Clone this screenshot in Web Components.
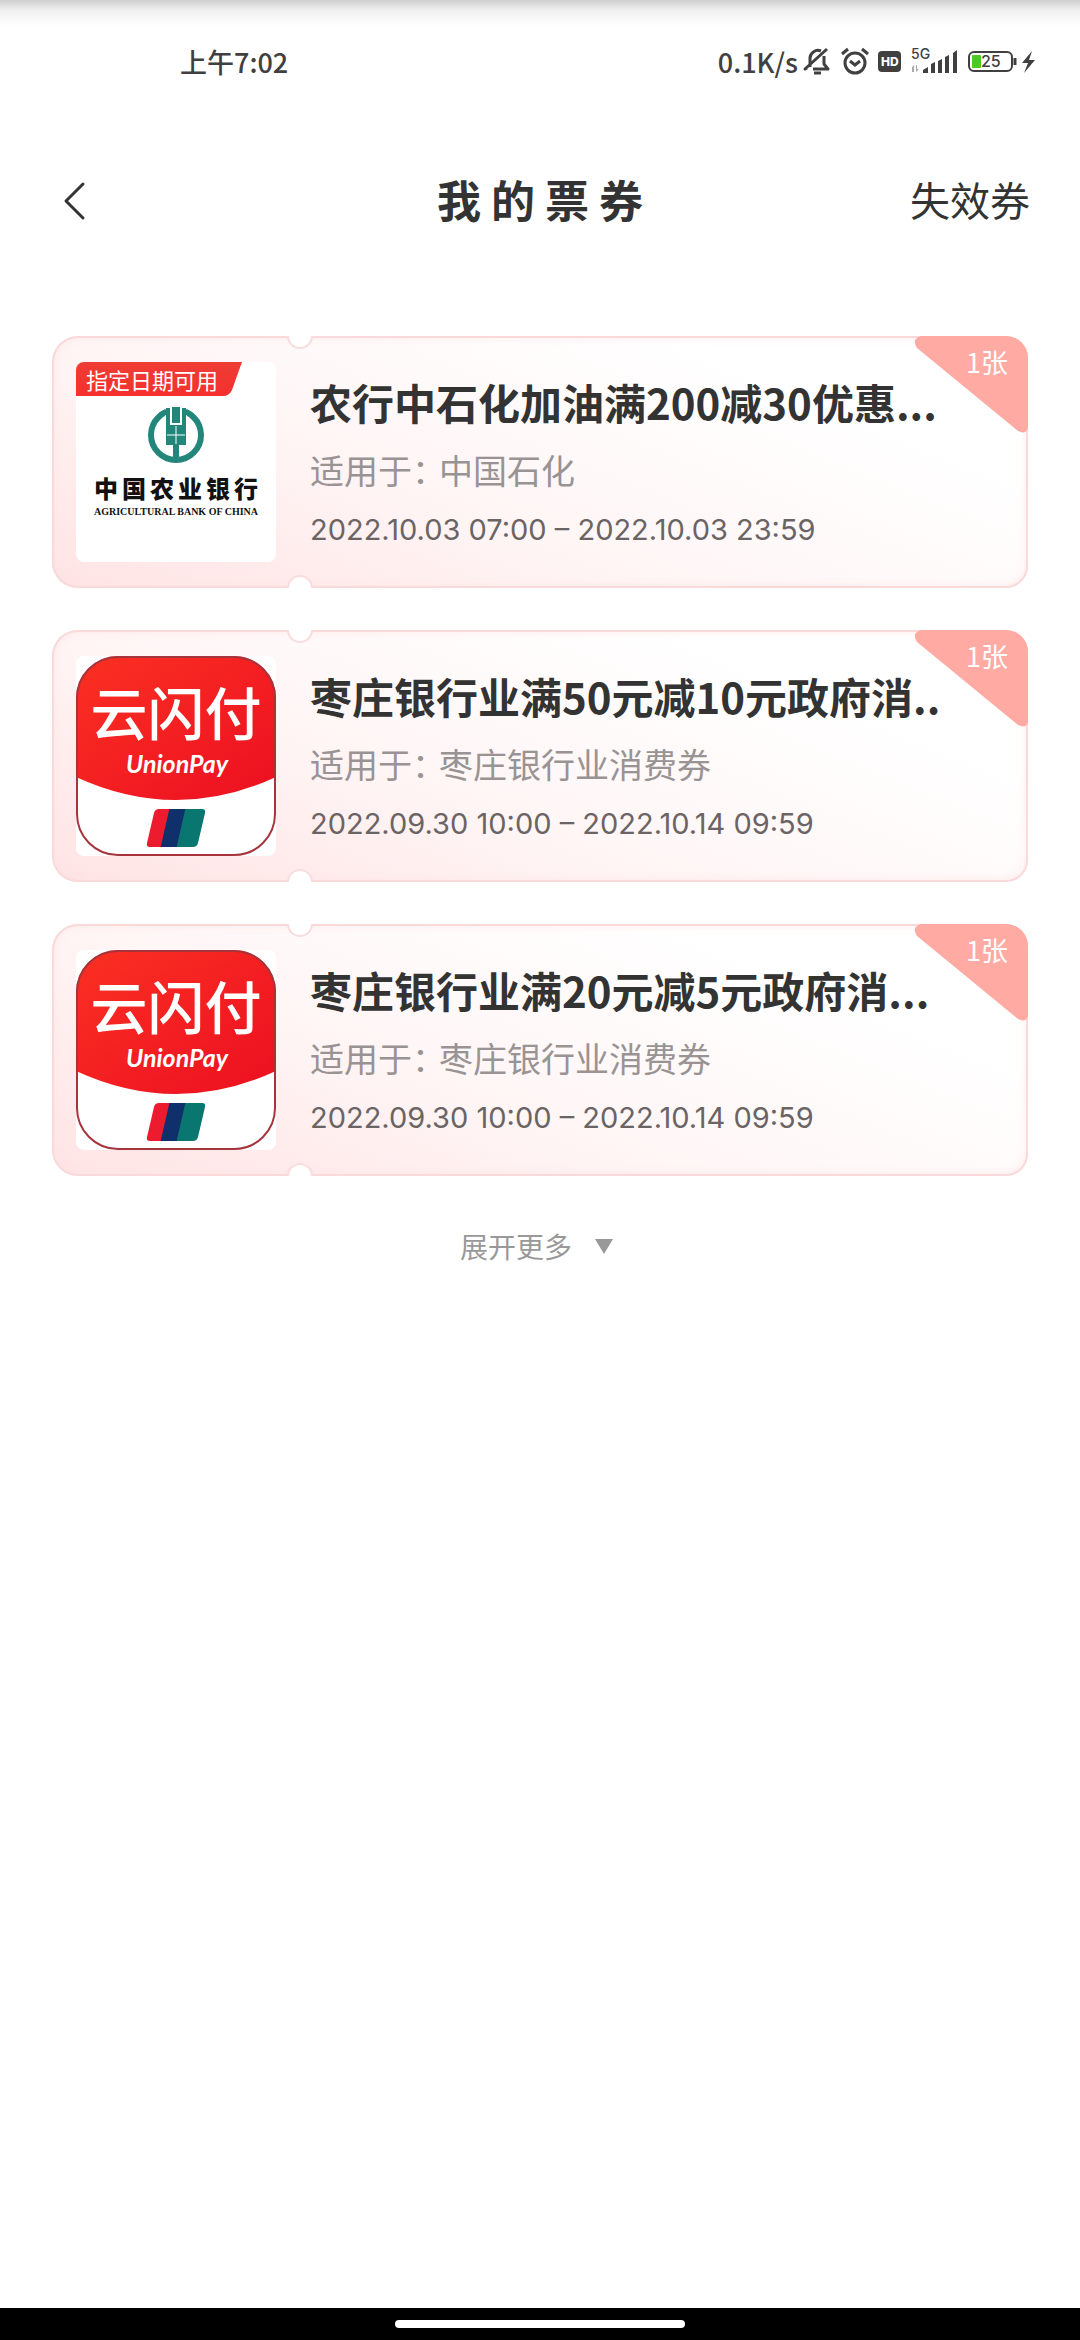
<!DOCTYPE html>
<html lang="zh-CN">
<head>
<meta charset="UTF-8">
<meta name="viewport" content="width=device-width, initial-scale=1">
<title>我的票券</title>
<style>
  body {
    margin: 0;
    min-height: 100vh;
    display: flex;
    flex-direction: column;
    background: linear-gradient(#cfcfcf, #f0f0f0 10px, #ffffff 26px) no-repeat #ffffff;
    color: #333333;
    font-family: "Noto Sans CJK SC", sans-serif;
  }

  main {
    flex: 1;
    display: flex;
    flex-direction: column;
    gap: 42px;
    padding: 60px 52px;
  }
</style>
</head>
<body>
  <status-bar></status-bar>
  <page-header>
    我的票券
    <span slot="action">失效券</span>
  </page-header>

  <main>
    <coupon-card>
      <abc-logo slot="logo"></abc-logo>
      <span slot="tag">指定日期可用</span>
      <span slot="title">农行中石化加油满200减30优惠...</span>
      <span slot="scope">中国石化</span>
      <span slot="date">2022.10.03 07:00 – 2022.10.03 23:59</span>
      <span slot="count">1张</span>
    </coupon-card>
    <coupon-card>
      <unionpay-logo slot="logo"></unionpay-logo>
      <span slot="title">枣庄银行业满50元减10元政府消..</span>
      <span slot="scope">枣庄银行业消费券</span>
      <span slot="date">2022.09.30 10:00 – 2022.10.14 09:59</span>
      <span slot="count">1张</span>
    </coupon-card>
    <coupon-card>
      <unionpay-logo slot="logo"></unionpay-logo>
      <span slot="title">枣庄银行业满20元减5元政府消...</span>
      <span slot="scope">枣庄银行业消费券</span>
      <span slot="date">2022.09.30 10:00 – 2022.10.14 09:59</span>
      <span slot="count">1张</span>
    </coupon-card>
    <more-button>展开更多</more-button>
  </main>

  <home-indicator></home-indicator>

<script>
class StatusBar extends HTMLElement {
  constructor() {
    super();
    this.attachShadow({ mode: 'open' });
    this.shadowRoot.innerHTML = `
      <style>
      :host {
        display: flex;
        align-items: center;
        justify-content: space-between;
        height: 122px;
        padding: 0 42px 0 180px;
        color: #404040;
        font-size: 27px;
        font-weight: 500;
      }

      .icons {
        display: flex;
        align-items: center;
      }

      .speed {
        margin-right: 4px;
      }

      svg {
        display: block;
        font-family: Inter, sans-serif;
      }
      </style>

      <span>上午7:02</span>
      <div class="icons">
        <span class="speed">0.1K/s</span>
        <svg width="236" height="34" viewBox="0 -2 236 34" fill="none" stroke="#404040" stroke-width="3">
          <!-- muted bell -->
          <path d="M8 21V12a8 8 0 0 1 11-7M22 10v8l4 5H11M5 22l-2 1 22-20" stroke-linejoin="round"/>
          <path d="M12 27h7"/>
          <!-- alarm -->
          <circle cx="53" cy="17" r="10"/>
          <path d="M48 15l5 4 5-4M40 8l6-5M60 3l6 5"/>
          <!-- HD -->
          <rect x="76" y="5" width="23" height="21" rx="4" fill="#404040" stroke="none"/>
          <text x="79" y="20" font-size="12" font-weight="800" fill="#ffffff" stroke="none">HD</text>
          <!-- signal -->
          <g stroke="none" fill="#404040">
            <text x="109" y="13" font-size="14" font-weight="500">5G</text>
            <path d="M121 27v-3l5-3v6zM129 27v-9l4-2v11zM136 27V15l4-2v14zM143 27V11l4-2v18zM151 27V7l4-3v23z"/>
            <path fill="#aaaaaa" d="M109 22l3-3v7h-2v-5zM114 19v7l3-3h-2v-4z"/>
          </g>
          <!-- battery -->
          <rect x="167" y="6" width="43" height="19" rx="5" stroke-width="2"/>
          <rect x="170" y="9" width="9" height="13" rx="1" fill="#4cc922" stroke="none"/>
          <text x="179" y="21" font-size="16" fill="#404040" stroke="none">25</text>
          <path d="M213 12v7"/>
          <path d="M230 5l-10 12h6l-4 10 11-13h-6z" fill="#404040" stroke="none"/>
        </svg>
      </div>
    `;
  }
}

class PageHeader extends HTMLElement {
  constructor() {
    super();
    this.attachShadow({ mode: 'open' });
    this.shadowRoot.innerHTML = `
      <style>
      :host {
        display: grid;
        grid-template-columns: 1fr auto 1fr;
        align-items: center;
        height: 154px;
        padding: 0 50px;
      }

      h1 {
        margin: 0;
        padding-left: 10px;
        font-size: 44px;
        line-height: 64px;
        letter-spacing: 10px;
      }

      button {
        padding: 0;
        border: 0;
        background: none;
        color: inherit;
        font: inherit;
        font-size: 40px;
        line-height: 64px;
      }

      .back {
        justify-self: start;
      }

      .back svg {
        display: block;
      }

      .action {
        justify-self: end;
      }
      </style>

      <button class="back" aria-label="返回">
        <svg width="44" height="44" viewBox="0 0 44 44" fill="none" stroke="#333333" stroke-width="3" stroke-linecap="round" stroke-linejoin="round">
          <path d="M33 7L16 24l17 17"/>
        </svg>
      </button>
      <h1><slot></slot></h1>
      <button class="action"><slot name="action"></slot></button>
    `;
  }
}

class CouponCard extends HTMLElement {
  constructor() {
    super();
    this.attachShadow({ mode: 'open' });
    this.shadowRoot.innerHTML = `
      <style>
      :host {
        display: block;
      }

      .card {
        position: relative;
        display: flex;
        align-items: center;
        gap: 34px;
        padding: 26px 24px;
        border-radius: 26px 22px 22px 26px;
        overflow: hidden;
        background: linear-gradient(22deg, #ffe3e4, #fff5f5 38%, #ffffff 78%);
        box-shadow: inset 0 0 0 2px #f9d9da, inset 0 0 12px #ffe3e3;
      }

      /* punched holes on the tear line */
      .card::before,
      .card::after {
        content: "";
        position: absolute;
        left: 235px;
        width: 22px;
        height: 22px;
        border: 2px solid #f9dcdd;
        border-radius: 50%;
        background: #ffffff;
      }

      .card::before {
        top: -13px;
      }

      .card::after {
        bottom: -13px;
      }

      .logo {
        position: relative;
        flex: none;
        width: 200px;
        height: 200px;
        border-radius: 8px;
        overflow: hidden;
        background: #ffffff;
      }

      .tag {
        position: absolute;
        top: 0;
        left: 0;
        padding: 0 26px 0 10px;
        background: linear-gradient(#ee3d35, #f5302f);
        clip-path: path("M0 0H166L156 28Q153 34 147 34H0Z");
        color: #ffffff;
        font-size: 22px;
        line-height: 34px;
      }

      .info {
        flex: 1;
        min-width: 0;
        white-space: nowrap;
      }

      h2 {
        margin: 0;
        font-size: 42px;
        line-height: 64px;
      }

      p {
        margin: 6px 0 0;
      }

      .scope {
        display: flex;
        gap: 10px;
        color: #999393;
        font-size: 34px;
        line-height: 60px;
      }

      .label {
        font-feature-settings: "halt";
      }

      .date {
        color: #6b6464;
        font-family: Inter, sans-serif;
        font-size: 29px;
        line-height: 48px;
      }

      .count {
        position: absolute;
        top: 0;
        right: 0;
        width: 114px;
        height: 97px;
        padding: 6px 20px 0 0;
        box-sizing: border-box;
        background: #ffaba4;
        clip-path: path("M7 0H114V92Q112 99 104 95L3 12Q-3 3 7 0Z");
        color: #ffffff;
        font-size: 27px;
        line-height: 40px;
        text-align: right;
      }
      </style>

      <article class="card">
        <div class="logo">
          <slot name="logo"></slot>
          <div class="tag" hidden><slot name="tag"></slot></div>
        </div>
        <div class="info">
          <h2><slot name="title"></slot></h2>
          <p class="scope"><span class="label">适用于：</span><slot name="scope"></slot></p>
          <p class="date"><slot name="date"></slot></p>
        </div>
        <div class="count"><slot name="count"></slot></div>
      </article>
    `;
  }

  connectedCallback() {
    this.shadowRoot.querySelector('.tag').hidden = !this.querySelector('[slot="tag"]');
  }
}

class AbcLogo extends HTMLElement {
  constructor() {
    super();
    this.attachShadow({ mode: 'open' });
    this.shadowRoot.innerHTML = `
      <style>
      :host {
        display: flex;
        flex-direction: column;
        align-items: center;
        padding-top: 45px;
        color: #111111;
        white-space: nowrap;
      }

      .cn {
        margin-top: 8px;
        padding-left: 4px;
        font-size: 24px;
        font-weight: 900;
        line-height: 34px;
        letter-spacing: 4px;
      }

      .en {
        font: bold 10px/14px "Liberation Serif", serif;
      }
      </style>

      <svg width="56" height="56" viewBox="0 0 56 56">
        <circle cx="28" cy="28" r="25" fill="none" stroke="#22867b" stroke-width="6"/>
        <path fill="#ffffff" d="M17 0h22v14H17z"/>
        <path fill="#22867b" d="M18 1h4v17h12V1h4v37h-7v14h-6V38h-7zM24 0h8v16h-8zM11 6l7-4v6l-7 3zM38 2l8 5-1 4-7-3z"/>
        <path stroke="#ffffff" stroke-width="1" d="M28 19v18M19 28h18"/>
      </svg>
      <span class="cn">中国农业银行</span>
      <span class="en">AGRICULTURAL BANK OF CHINA</span>
    `;
  }
}

class UnionpayLogo extends HTMLElement {
  constructor() {
    super();
    this.attachShadow({ mode: 'open' });
    this.shadowRoot.innerHTML = `
      <style>
      :host {
        display: block;
      }

      svg {
        display: block;
      }

      .cn {
        font: 500 57px "Liberation Sans", "Noto Sans CJK SC", sans-serif;
      }

      .en {
        font: italic 700 25px Lato, sans-serif;
      }
      </style>

      <svg width="200" height="200" viewBox="0 0 200 200">
        <defs>
          <clipPath id="tile"><rect width="200" height="200" rx="42"/></clipPath>
          <clipPath id="emblem"><path d="M83 153h43q4 0 3 4l-7 30q-1 4-5 4H74q-4 0-3-4l7-30q1-4 5-4z"/></clipPath>
          <linearGradient id="red" x1="0" y1="0" x2="1" y2="1">
            <stop offset="0" stop-color="#fb3022"/>
            <stop offset="1" stop-color="#ec0f21"/>
          </linearGradient>
        </defs>
        <path clip-path="url(#tile)" fill="url(#red)" d="M0 0h200v121q-100 46-200 0z"/>
        <rect x="1" y="1" width="198" height="198" rx="41" fill="none" stroke="#a5343c" stroke-width="2"/>
        <g fill="#ffffff" text-anchor="middle">
          <text class="cn" x="100" y="79">云闪付</text>
          <text class="en" x="101" y="117">UnionPay</text>
        </g>
        <g clip-path="url(#emblem)">
          <path fill="#ed1b2e" d="M66 150h40l-9 44H66z"/>
          <path fill="#10306c" d="M94 150h30l-9 44H84z"/>
          <path fill="#0a7670" d="M110 150h30l-9 44h-31z"/>
        </g>
      </svg>
    `;
  }
}

class MoreButton extends HTMLElement {
  constructor() {
    super();
    this.attachShadow({ mode: 'open' });
    this.shadowRoot.innerHTML = `
      <style>
      :host {
        display: flex;
        justify-content: center;
      }

      button {
        display: flex;
        align-items: center;
        gap: 16px;
        padding: 0;
        border: 0;
        background: none;
        color: #999999;
        font: inherit;
        font-size: 28px;
        line-height: 56px;
      }
      </style>

      <button>
        <slot></slot>
        <svg width="32" height="16" viewBox="0 0 32 16"><path fill="#999999" d="M7 1h18l-9 15z"/></svg>
      </button>
    `;
  }
}

class HomeIndicator extends HTMLElement {
  constructor() {
    super();
    this.attachShadow({ mode: 'open' });
    this.shadowRoot.innerHTML = `
      <style>
      :host {
        display: flex;
        align-items: center;
        justify-content: center;
        height: 32px;
        background: #000000;
      }

      .pill {
        width: 290px;
        height: 8px;
        border-radius: 4px;
        background: #ffffff;
      }
      </style>

      <div class="pill"></div>
    `;
  }
}

customElements.define('status-bar', StatusBar);
customElements.define('page-header', PageHeader);
customElements.define('coupon-card', CouponCard);
customElements.define('abc-logo', AbcLogo);
customElements.define('unionpay-logo', UnionpayLogo);
customElements.define('more-button', MoreButton);
customElements.define('home-indicator', HomeIndicator);
</script>
</body>
</html>
